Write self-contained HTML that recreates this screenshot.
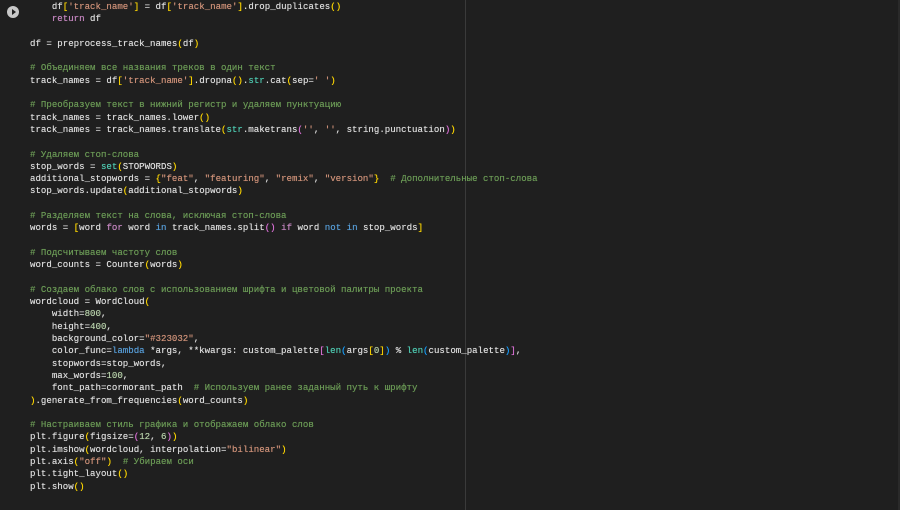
<!DOCTYPE html>
<html><head><meta charset="utf-8"><style>
html,body{margin:0;padding:0;width:900px;height:510px;overflow:hidden;background:#1f1f1f}
.run{position:absolute;left:7px;top:6px;width:12px;height:12px;border-radius:50%;background:#c8c8c8}
.run:after{content:"";position:absolute;left:4.5px;top:3px;border-left:4.5px solid #1f1f1f;border-top:3px solid transparent;border-bottom:3px solid transparent}
.ruler{position:absolute;left:465px;top:0;width:1px;height:510px;background:#3a3a3a}
.edge{position:absolute;right:0;top:0;width:2px;height:510px;background:#2a2a2a}
pre{position:absolute;left:30px;top:1px;margin:0;font-family:"Liberation Mono","DejaVu Sans Mono",monospace;font-size:9.1px;line-height:12.3px;color:#dcdcdc;white-space:pre;text-shadow:0 0 0.4px currentColor}
.c{color:#6a9955}.s{color:#ce9178}.k{color:#c586c0}.b{color:#569cd6}.t{color:#4ec9b0}.n{color:#b5cea8}.y{color:#ffd700}.p{color:#da70d6}.l{color:#179fff}
</style></head><body>
<div class="run"></div><div class="ruler"></div><div class="edge"></div>
<pre>    df<span class="y">[</span><span class="s">'track_name'</span><span class="y">]</span> = df<span class="y">[</span><span class="s">'track_name'</span><span class="y">]</span>.drop_duplicates<span class="y">()</span>
    <span class="k">return</span> df

df = preprocess_track_names<span class="y">(</span>df<span class="y">)</span>

<span class="c"># Объединяем все названия треков в один текст</span>
track_names = df<span class="y">[</span><span class="s">'track_name'</span><span class="y">]</span>.dropna<span class="y">()</span>.<span class="t">str</span>.cat<span class="y">(</span>sep=<span class="s">' '</span><span class="y">)</span>

<span class="c"># Преобразуем текст в нижний регистр и удаляем пунктуацию</span>
track_names = track_names.lower<span class="y">()</span>
track_names = track_names.translate<span class="y">(</span><span class="t">str</span>.maketrans<span class="p">(</span><span class="s">''</span>, <span class="s">''</span>, string.punctuation<span class="p">)</span><span class="y">)</span>

<span class="c"># Удаляем стоп-слова</span>
stop_words = <span class="t">set</span><span class="y">(</span>STOPWORDS<span class="y">)</span>
additional_stopwords = <span class="y">{</span><span class="s">"feat"</span>, <span class="s">"featuring"</span>, <span class="s">"remix"</span>, <span class="s">"version"</span><span class="y">}</span>  <span class="c"># Дополнительные стоп-слова</span>
stop_words.update<span class="y">(</span>additional_stopwords<span class="y">)</span>

<span class="c"># Разделяем текст на слова, исключая стоп-слова</span>
words = <span class="y">[</span>word <span class="k">for</span> word <span class="b">in</span> track_names.split<span class="p">()</span> <span class="k">if</span> word <span class="b">not</span> <span class="b">in</span> stop_words<span class="y">]</span>

<span class="c"># Подсчитываем частоту слов</span>
word_counts = Counter<span class="y">(</span>words<span class="y">)</span>

<span class="c"># Создаем облако слов с использованием шрифта и цветовой палитры проекта</span>
wordcloud = WordCloud<span class="y">(</span>
    width=<span class="n">800</span>,
    height=<span class="n">400</span>,
    background_color=<span class="s">"#323032"</span>,
    color_func=<span class="b">lambda</span> *args, **kwargs: custom_palette<span class="p">[</span><span class="t">len</span><span class="l">(</span>args<span class="y">[</span><span class="n">0</span><span class="y">]</span><span class="l">)</span> % <span class="t">len</span><span class="l">(</span>custom_palette<span class="l">)</span><span class="p">]</span>,
    stopwords=stop_words,
    max_words=<span class="n">100</span>,
    font_path=cormorant_path  <span class="c"># Используем ранее заданный путь к шрифту</span>
<span class="y">)</span>.generate_from_frequencies<span class="y">(</span>word_counts<span class="y">)</span>

<span class="c"># Настраиваем стиль графика и отображаем облако слов</span>
plt.figure<span class="y">(</span>figsize=<span class="p">(</span><span class="n">12</span>, <span class="n">6</span><span class="p">)</span><span class="y">)</span>
plt.imshow<span class="y">(</span>wordcloud, interpolation=<span class="s">"bilinear"</span><span class="y">)</span>
plt.axis<span class="y">(</span><span class="s">"off"</span><span class="y">)</span>  <span class="c"># Убираем оси</span>
plt.tight_layout<span class="y">()</span>
plt.show<span class="y">()</span></pre>
</body></html>
